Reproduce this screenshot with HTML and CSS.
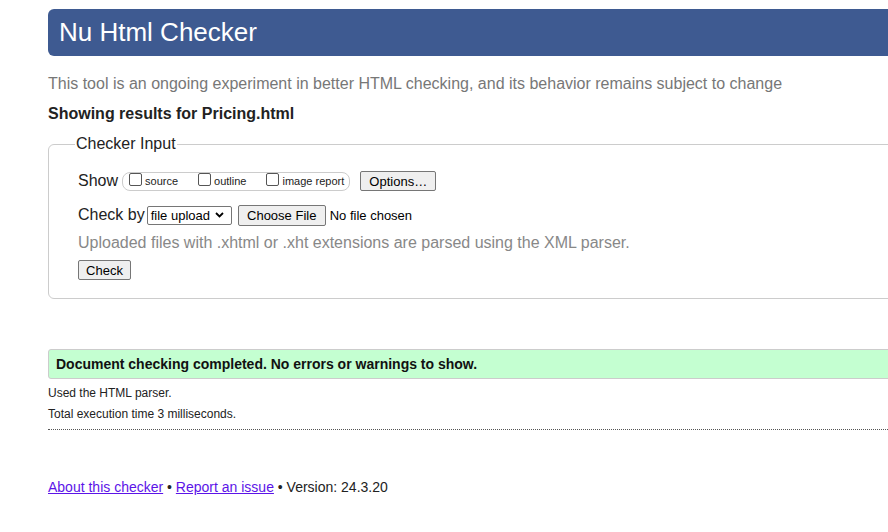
FILE: index.html
```html
<!DOCTYPE html>
<html>
<head>
<meta charset="utf-8">
<link rel="stylesheet" href="styles.css">
</head>
<body>
<div class="page">
  <h1 class="header">Nu Html Checker</h1>
  <p class="intro">This tool is an ongoing experiment in better HTML checking, and its behavior remains subject to change</p>
  <p class="showing">Showing results for Pricing.html</p>
  <fieldset class="input">
    <legend class="legend">Checker Input</legend>
    <div class="row show-row">
      <span class="label">Show</span>
      <span class="pill">
        <label class="opt"><span class="cb"></span>source</label>
        <label class="opt"><span class="cb"></span>outline</label>
        <label class="opt"><span class="cb"></span>image report</label>
      </span>
      <span class="btn btn-options">Options…</span>
    </div>
    <div class="row by-row">
      <span class="label">Check by</span>
      <span class="select">file upload<svg class="chev" width="9" height="6" viewBox="0 0 9 6"><path d="M1 1 L4.5 4.5 L8 1" fill="none" stroke="#000" stroke-width="1.8"/></svg></span>
      <span class="btn btn-file">Choose File</span>
      <span class="nofile">No file chosen</span>
    </div>
    <p class="hint">Uploaded files with .xhtml or .xht extensions are parsed using the XML parser.</p>
    <span class="btn btn-check">Check</span>
  </fieldset>
  <div class="success">Document checking completed. No errors or warnings to show.</div>
  <p class="meta meta1">Used the HTML parser.</p>
  <p class="meta meta2">Total execution time 3 milliseconds.</p>
  <hr class="dots">
  <p class="footer"><a href="#" class="link">About this checker</a> • <a href="#" class="link">Report an issue</a> • Version: 24.3.20</p>
</div>
</body>
</html>
```
FILE: styles.css
```css
html, body {
  margin: 0;
  padding: 0;
  overflow: hidden;
  background: #fff;
}
body {
  font-family: "Liberation Sans", Arial, sans-serif;
  color: #000;
}
.page {
  margin-left: 48px;
  width: 900px;
  padding-top: 9px;
}
.header {
  margin: 0;
  height: 47px;
  line-height: 46px;
  background: #3e5a91;
  color: #fff;
  font-weight: normal;
  font-size: 26px;
  padding-left: 11px;
  border-radius: 6px 0 0 6px;
}
.intro {
  margin: 18px 0 0 0;
  font-size: 16px;
  line-height: 20px;
  color: #777;
}
.showing {
  margin: 10px 0 0 0;
  font-size: 16px;
  line-height: 20px;
  font-weight: bold;
  color: #222;
}
.input {
  margin: 11px 0 0 0;
  padding: 17px 0 17px 29px;
  border: 1px solid #ccc;
  border-radius: 6px 0 0 6px;
  height: 128px;
  box-sizing: content-box;
}
.legend {
  font-size: 16px;
  color: #222;
  padding: 0 1px;
  margin-left: -3px;
  line-height: 18px;
}
.row {
  display: flex;
  align-items: center;
}
.label {
  font-size: 16px;
  color: #222;
}
.show-row {
  height: 22px;
}
.pill {
  display: inline-flex;
  align-items: center;
  flex: none;
  white-space: nowrap;
  margin-left: 4px;
  height: 17px;
  border: 1px solid #ccc;
  border-radius: 8px;
  padding: 0 5px 0 6px;
}
.opt {
  display: inline-flex;
  align-items: center;
  white-space: nowrap;
  font-size: 11px;
  color: #222;
  margin-right: 20px;
}
.opt:last-child {
  margin-right: 0;
}
.cb {
  display: inline-block;
  width: 11px;
  height: 11px;
  border: 1px solid #555;
  border-radius: 2px;
  margin-right: 3px;
  margin-top: -4px;
}
.btn {
  display: inline-flex;
  align-items: center;
  justify-content: center;
  box-sizing: border-box;
  font-size: 13px;
  color: #000;
  background: #efefef;
  border: 1px solid #767676;
  border-radius: 2px;
  height: 20px;
  flex: none;
}
.btn-options {
  margin-left: 10px;
  width: 76px;
  height: 20px;
}
.by-row {
  margin-top: 12px;
  height: 22px;
}
.select {
  display: inline-flex;
  align-items: center;
  box-sizing: border-box;
  height: 19px;
  width: 85px;
  margin-left: 2px;
  border: 1px solid #767676;
  border-radius: 2px;
  font-size: 13px;
  padding-left: 3px;
  color: #000;
}
.chev {
  margin-left: 5px;
}
.btn-file {
  margin-left: 6px;
  width: 88px;
  height: 21px;
}
.nofile {
  font-size: 13px;
  margin-left: 4px;
  color: #000;
}
.hint {
  margin: 7px 0 0 0;
  font-size: 16px;
  line-height: 20px;
  color: #888;
}
.btn-check {
  margin-top: 7px;
  width: 53px;
  height: 20px;
}
.success {
  margin-top: 50px;
  box-sizing: border-box;
  height: 30px;
  line-height: 28px;
  background: #c4ffd1;
  border: 1px solid #ccc;
  border-radius: 3px 0 0 3px;
  padding-left: 7px;
  font-size: 14px;
  font-weight: bold;
  color: #111;
}
.meta {
  margin: 0;
  font-size: 12px;
  color: #222;
  line-height: 14px;
}
.meta1 {
  margin-top: 7px;
}
.meta2 {
  margin-top: 7px;
}
.dots {
  margin: 8px 0 0 0;
  border: 0;
  border-top: 1px dotted #555;
  height: 0;
}
.footer {
  margin: 49px 0 0 0;
  font-size: 14px;
  color: #222;
  line-height: 16px;
}
.link {
  color: #5c14e8;
  text-decoration: underline;
}
```
